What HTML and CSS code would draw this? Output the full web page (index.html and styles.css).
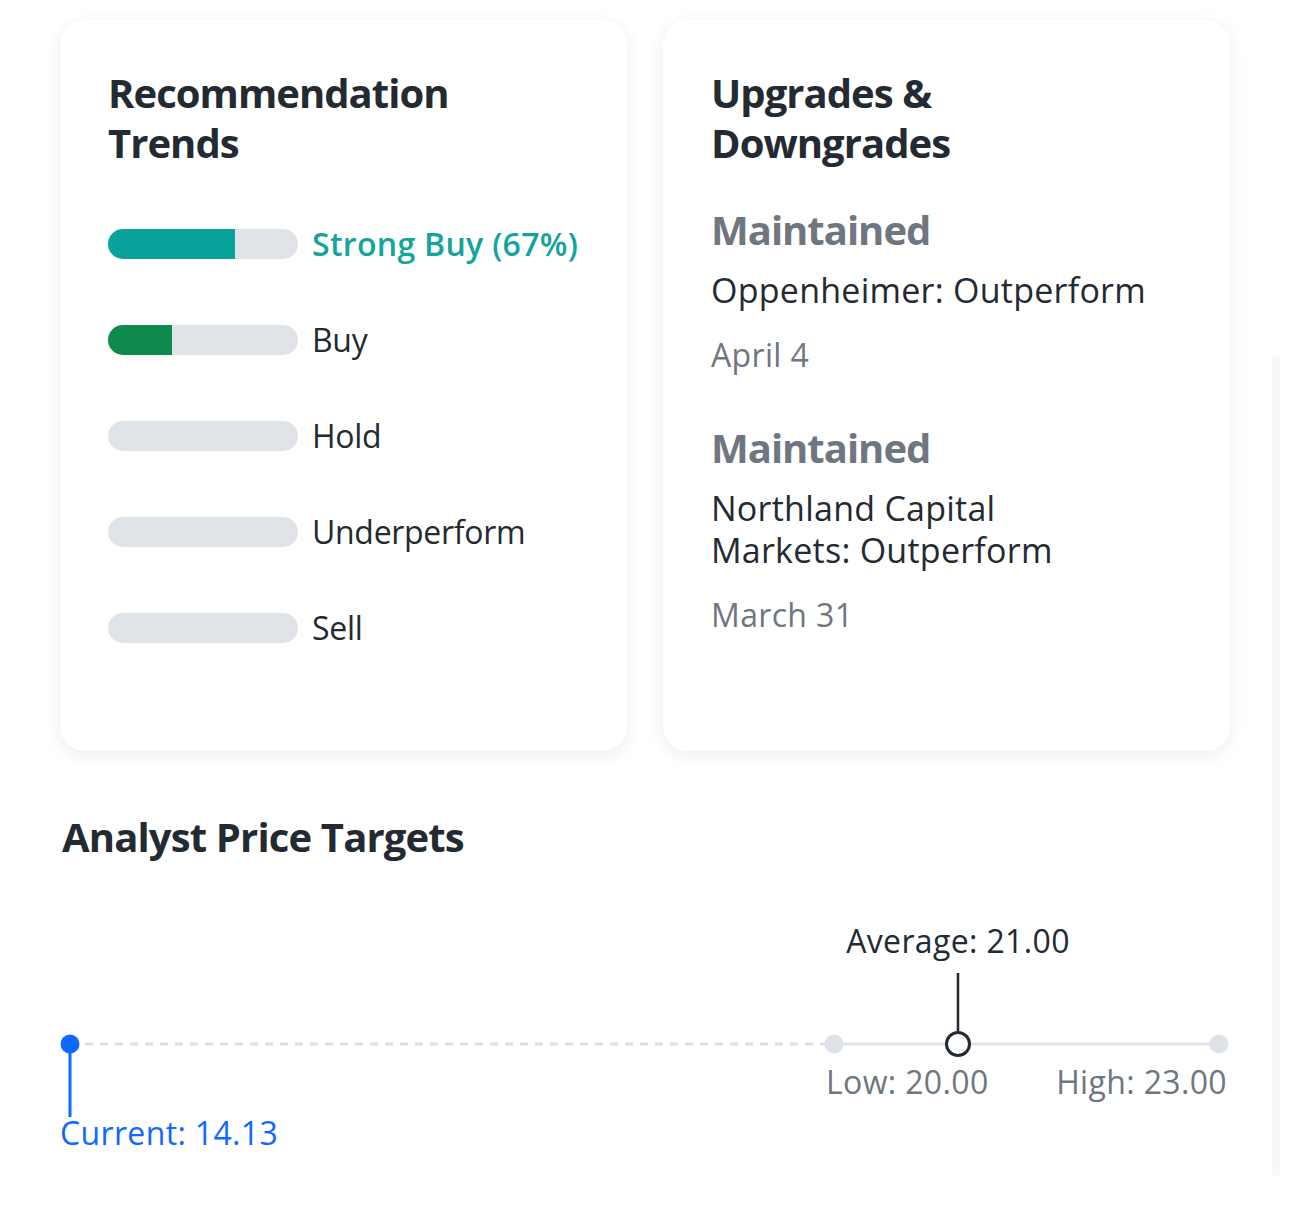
FILE: index.html
```html
<!DOCTYPE html>
<html lang="en">
<head>
<meta charset="utf-8">
<title>Analyst Insights</title>
<link rel="stylesheet" href="styles.css">
</head>
<body>
<div class="page">
  <div class="cards">
    <section class="card">
      <h2 class="card-title">Recommendation Trends</h2>
      <ul class="trends">
        <li class="trend trend-active">
          <span class="bar"><span class="fill fill-strong" style="width:67%"></span></span>
          <span class="trend-label">Strong Buy (67%)</span>
        </li>
        <li class="trend">
          <span class="bar"><span class="fill fill-buy" style="width:33.5%"></span></span>
          <span class="trend-label">Buy</span>
        </li>
        <li class="trend">
          <span class="bar"></span>
          <span class="trend-label">Hold</span>
        </li>
        <li class="trend">
          <span class="bar"></span>
          <span class="trend-label">Underperform</span>
        </li>
        <li class="trend">
          <span class="bar"></span>
          <span class="trend-label">Sell</span>
        </li>
      </ul>
    </section>
    <section class="card">
      <h2 class="card-title">Upgrades &amp; Downgrades</h2>
      <div class="ug-list">
        <div class="ug-item">
          <div class="ug-action">Maintained</div>
          <div class="ug-firm">Oppenheimer: Outperform</div>
          <div class="ug-date">April 4</div>
        </div>
        <div class="ug-item">
          <div class="ug-action">Maintained</div>
          <div class="ug-firm">Northland Capital<br>Markets: Outperform</div>
          <div class="ug-date">March 31</div>
        </div>
      </div>
    </section>
  </div>

  <h2 class="pt-title">Analyst Price Targets</h2>
  <div class="chart">
    <svg class="chart-svg" width="1170" height="300" viewBox="0 0 1170 300">
      <line x1="10" y1="164" x2="774" y2="164" stroke="#dcdfe4" stroke-width="3" stroke-dasharray="8 7"/>
      <line x1="774" y1="164" x2="1159" y2="164" stroke="#e0e4e9" stroke-width="3"/>
      <circle cx="774" cy="164" r="9.5" fill="#dfe2e8"/>
      <circle cx="1159" cy="164" r="9.5" fill="#dfe2e8"/>
      <line x1="898" y1="93" x2="898" y2="151" stroke="#232a31" stroke-width="2.5"/>
      <circle cx="898" cy="164" r="11.5" fill="#fff" stroke="#232a31" stroke-width="3"/>
      <line x1="10" y1="164" x2="10" y2="237" stroke="#0f69ff" stroke-width="3"/>
      <circle cx="10" cy="164" r="9.5" fill="#0f69ff"/>
    </svg>
    <span class="pt-label pt-avg">Average: 21.00</span>
    <span class="pt-label pt-low">Low: 20.00</span>
    <span class="pt-label pt-high">High: 23.00</span>
    <span class="pt-label pt-current">Current: 14.13</span>
  </div>
</div>
<div class="scroll-track"></div>
</body>
</html>
```

FILE: styles.css
```css
* { box-sizing: border-box; }

html, body {
  margin: 0;
  padding: 0;
  background: #ffffff;
}

body {
  font-family: "Open Sans", "Noto Sans", sans-serif;
  color: #232a31;
  width: 1290px;
  height: 1223px;
  overflow: hidden;
  position: relative;
}

.page {
  padding: 20px 60px 0 60px;
}

.cards {
  display: grid;
  grid-template-columns: 1fr 1fr;
  gap: 36px;
}

.card {
  height: 731px;
  background: #fff;
  border-radius: 24px;
  box-shadow: 0 4px 18px rgba(0, 0, 0, 0.07), 0 0 2px rgba(0, 0, 0, 0.03);
  padding: 48px 48px 0 48px;
}

.card-title {
  margin: 0;
  max-width: 420px;
  font-size: 40px;
  line-height: 50px;
  font-weight: 700;
  letter-spacing: -0.95px;
  color: #232a31;
}

.trends {
  list-style: none;
  margin: 56px 0 0 0;
  padding: 0;
  display: flex;
  flex-direction: column;
  gap: 56px;
}

.trend {
  display: flex;
  align-items: center;
  gap: 14px;
  height: 40px;
}

.bar {
  display: block;
  flex: 0 0 190px;
  height: 30px;
  border-radius: 15px;
  background: #e0e4e9;
  overflow: hidden;
}

.fill {
  display: block;
  height: 100%;
}

.fill-strong { background: #0aa39b; }
.fill-buy { background: #0f8a4d; }

.trend-label {
  font-size: 32px;
  line-height: 40px;
  color: #232a31;
  letter-spacing: -0.3px;
}

.trend-active .trend-label {
  color: #14a49c;
  font-weight: 600;
  letter-spacing: 0.3px;
}

.ug-list {
  margin-top: 38px;
  display: flex;
  flex-direction: column;
  gap: 49px;
}

.ug-action {
  font-size: 40px;
  line-height: 48px;
  font-weight: 700;
  color: #6e7780;
  letter-spacing: -1px;
}

.ug-firm {
  margin-top: 15px;
  font-size: 34px;
  line-height: 42px;
  color: #232a31;
  letter-spacing: 0.25px;
}

.ug-date {
  margin-top: 24px;
  font-size: 32px;
  line-height: 40px;
  color: #6e7780;
  letter-spacing: 0.35px;
}

.pt-title {
  margin: 61px 0 0 2px;
  font-size: 40px;
  line-height: 50px;
  font-weight: 700;
  letter-spacing: -0.85px;
  color: #232a31;
}

.chart {
  position: relative;
  margin-top: 18px;
  height: 300px;
  width: 1170px;
}

.chart-svg {
  display: block;
}

.pt-label {
  position: absolute;
  font-size: 32px;
  line-height: 40px;
  white-space: nowrap;
  letter-spacing: 0.35px;
}

.pt-avg {
  top: 41px;
  left: 898px;
  transform: translateX(-50%);
  color: #232a31;
}

.pt-low {
  top: 182px;
  left: 766px;
  color: #6e7780;
}

.pt-high {
  top: 182px;
  right: 3px;
  color: #6e7780;
}

.pt-current {
  top: 233px;
  left: 0;
  color: #0f69ff;
}

.scroll-track {
  position: absolute;
  left: 1272px;
  top: 355px;
  width: 8px;
  height: 822px;
  background: #f8f8f9;
  border-radius: 4px;
}
```
